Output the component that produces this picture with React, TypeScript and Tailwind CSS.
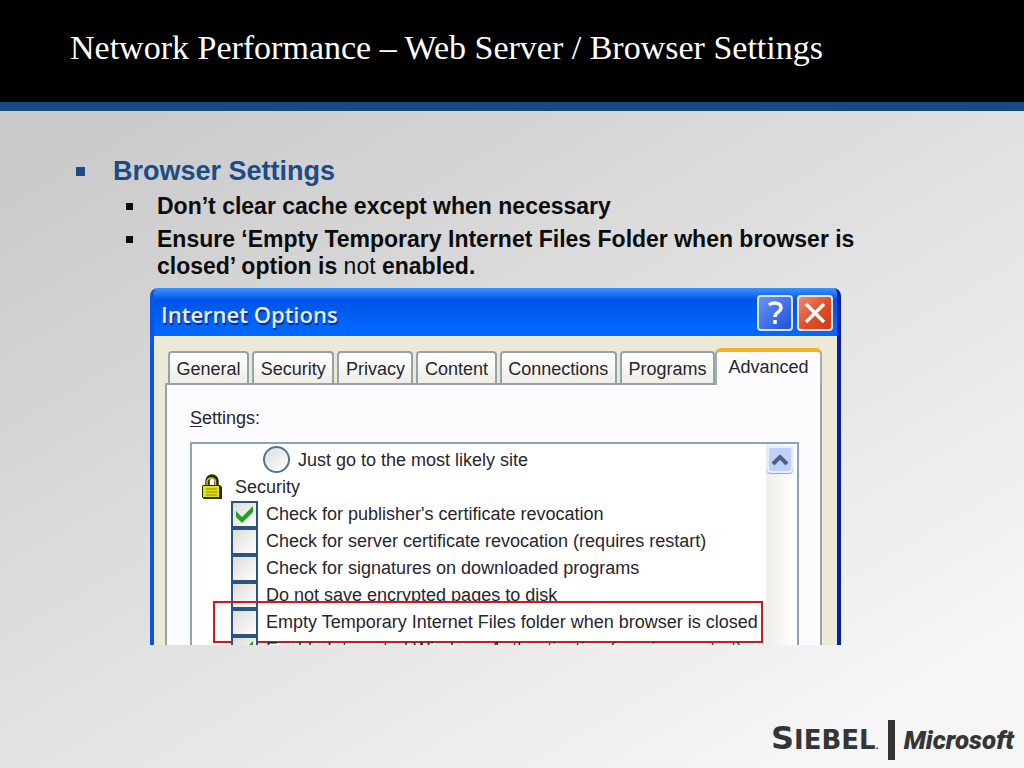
import React from 'react';

const tabs = ['General', 'Security', 'Privacy', 'Content', 'Connections', 'Programs'];

const options = [
  { id: 'publisher', label: "Check for publisher's certificate revocation", checked: true },
  { id: 'server', label: 'Check for server certificate revocation (requires restart)', checked: false },
  { id: 'signatures', label: 'Check for signatures on downloaded programs', checked: false },
  { id: 'encrypted', label: 'Do not save encrypted pages to disk', checked: false, clipped: true },
  { id: 'empty-temp', label: 'Empty Temporary Internet Files folder when browser is closed', checked: false, highlighted: true },
  { id: 'integrated', label: 'Enable Integrated Windows Authentication (requires restart)', checked: true },
];

function LockIcon() {
  return (
    <svg width="22" height="26" viewBox="0 0 22 26" aria-hidden="true">
      <path d="M6.500 12V7a4.500 4.500 0 0 1 9 0V12" fill="none" stroke="#2b2a05" strokeWidth="4.500" />
      <path d="M6 12V7a4.500 4.500 0 0 1 8.500 0V12" fill="none" stroke="#c9c655" strokeWidth="1.500" />
      <path d="M2 11h17l2 2v12H3l-2-2V12z" fill="#2b2a05" />
      <path d="M2 12h16v11H2z" fill="#e2e214" />
      <path d="M5 15h11M5 18h11M5 21h11" stroke="#8c8a10" strokeWidth="1" />
    </svg>
  );
}

interface CheckOptionProps {
  id: string;
  label: string;
  checked: boolean;
  clipped?: boolean;
  highlighted?: boolean;
}

function CheckOption({ id, label, checked, clipped, highlighted }: CheckOptionProps) {
  return (
    <li className="relative flex h-[27px] items-center gap-2 pl-[39px]">
      <span className="grid h-[27px] w-[27px] shrink-0">
        <input
          id={id}
          type="checkbox"
          defaultChecked={checked}
          className="col-start-1 row-start-1 h-[27px] w-[27px] appearance-none border-2 border-[#2a5580] bg-linear-to-br from-[#dcdcd7] to-white"
        />
        {checked && (
          <svg
            viewBox="0 0 27 27"
            className="pointer-events-none col-start-1 row-start-1 h-[27px] w-[27px]"
            aria-hidden="true"
          >
            <path d="M5 10l6 6L22 5v6L11 22 5 16z" fill="#21a121" />
          </svg>
        )}
      </span>
      <label
        htmlFor={id}
        className={`whitespace-nowrap leading-[27px] ${clipped ? 'h-5 self-start overflow-hidden' : ''}`}
      >
        {label}
      </label>
      {highlighted && (
        <span className="pointer-events-none absolute -top-2 left-[21px] h-[42px] w-[550px] border-2 border-[#d2181c]" />
      )}
    </li>
  );
}

function InternetOptions() {
  return (
    <section className="flex h-[357px] w-full max-w-[691px] flex-col overflow-hidden rounded-t-lg border-x-4 border-l-[#0a55e6] border-r-[#0420a8] bg-[#ece9d8] font-['Liberation_Sans',Arial,sans-serif] text-lg text-[#26262e]">
      <header className="-mx-1 flex h-12 shrink-0 items-center justify-between bg-linear-to-b from-[#3a93ff] via-[#0054e6] via-25% to-[#0068ff] to-85% pl-[11px] pr-2 pt-0.5">
        <h2 className="pt-0.5 font-['Open_Sans',sans-serif] text-[22px] font-semibold leading-8 text-[#e6eeff] [text-shadow:1px_2px_1px_#0a2a8a]">
          Internet Options
        </h2>
        <div className="flex gap-1">
          <button
            aria-label="Help"
            className="flex h-9 w-9 items-center justify-center rounded border-2 border-[#dce6ff] bg-linear-to-br from-[#6a94f8] to-[#1f4fd8]"
          >
            <svg width="20" height="26" viewBox="0 0 20 26" fill="none" stroke="#fff" strokeWidth="3.500" aria-hidden="true">
              <path d="M4 5c3-3 12-3 12 3 0 4-6 4-6 9M10 20v4" />
            </svg>
          </button>
          <button
            aria-label="Close"
            className="flex h-9 w-9 items-center justify-center rounded border-2 border-[#fbe4dc] bg-linear-to-br from-[#ee8a6c] via-[#e0512c] to-[#cf3a12]"
          >
            <svg width="22" height="22" viewBox="0 0 22 22" stroke="#fff" strokeWidth="3.500" aria-hidden="true">
              <path d="M2 2l18 18M20 2L2 20" />
            </svg>
          </button>
        </div>
      </header>

      <div className="flex min-h-0 grow flex-col pl-[11px] pr-[15px] pt-3">
        <nav className="z-10 -mb-0.5 flex shrink-0 items-end gap-[3px] pl-[3px]">
          {tabs.map((tab) => (
            <button
              key={tab}
              className="mb-0.5 h-8 grow rounded-t border-2 border-b-0 border-[#93a3a8] bg-linear-to-b from-white to-[#eeeee6] pt-0.5"
            >
              {tab}
            </button>
          ))}
          <button className="-ml-[3px] h-[37px] w-[107px] rounded-t-md border-x-2 border-t-4 border-x-[#a3adae] border-t-[#f3b02c] bg-[#fcfcfe] pb-1">
            Advanced
          </button>
        </nav>

        <div className="flex min-h-0 grow flex-col border-2 border-b-0 border-[#98a3a4] bg-[#fbfbfd] pl-[23px] pr-[21px] pt-5">
          <p id="settings-label" className="mb-[11px] leading-[26px]">
            <u className="underline-offset-2">S</u>ettings:
          </p>
          <div className="flex min-h-0 grow justify-between border-2 border-b-0 border-[#8aa5ba] bg-white">
            <ul aria-labelledby="settings-label" className="pt-0.5">
              <li className="flex h-[27px] items-center gap-2 pl-[71px]">
                <input
                  id="likely"
                  type="radio"
                  className="h-[27px] w-[27px] appearance-none rounded-full border-2 border-[#527394] bg-linear-to-br from-[#dcdcd7] to-white"
                />
                <label htmlFor="likely">Just go to the most likely site</label>
              </li>
              <li className="flex h-7 items-center gap-3 pl-[9px]">
                <LockIcon />
                Security
              </li>
              {options.map((option) => (
                <CheckOption key={option.id} {...option} />
              ))}
            </ul>
            <div className="mr-[3px] w-7 shrink-0 bg-linear-to-r from-[#efeee8] to-[#fefefb] pl-px pt-0.5">
              <button
                aria-label="Scroll up"
                className="flex h-[27px] w-[26px] items-center justify-center rounded border-2 border-[#e6edff] bg-[#c1d0fb] shadow-[0_1px_1px_#8fa8cc]"
              >
                <svg width="18" height="12" viewBox="0 0 18 12" fill="none" stroke="#4d6185" strokeWidth="4" aria-hidden="true">
                  <path d="M2 10l7-7 7 7" />
                </svg>
              </button>
            </div>
          </div>
        </div>
      </div>
    </section>
  );
}

function Logos() {
  return (
    <footer className="mt-auto flex h-14 items-center justify-end gap-[9px] pr-[10px] leading-none text-[#353535]">
      <span className="pt-1 font-['DejaVu_Sans',sans-serif] text-[26px] font-bold leading-8">
        <span className="text-[32px]">S</span>IEBEL<span className="text-[8px]">.</span>
      </span>
      <span className="h-10 w-[7px] bg-[#353535]" />
      <span className="font-['Roboto','Liberation_Sans',sans-serif] text-[26px] font-black italic leading-none">
        Microsoft
      </span>
    </footer>
  );
}

export default function App() {
  return (
    <div className="flex min-h-screen flex-col bg-linear-[150deg] from-[#cbcbcb] from-15% to-[#f6f6f6] to-90% font-['Liberation_Sans',Arial,sans-serif]">
      <header className="h-[111px] border-b-[9px] border-[#174a80] bg-black px-[70px] pt-7">
        <h1 className="font-['Liberation_Serif','Times_New_Roman',serif] text-[34px] leading-10 text-white">
          Network Performance – Web Server / Browser Settings
        </h1>
      </header>

      <main className="pl-[76px] pr-[140px] pt-[42px]">
        <div className="flex items-center gap-7 text-[#1b4c87]">
          <span className="h-[9px] w-[9px] bg-[#1b4c87]" />
          <h2 className="text-[27px] font-bold leading-9">Browser Settings</h2>
        </div>
        <ul className="mt-1 space-y-1.5 pl-[50px] text-[23px] font-bold leading-[27px] text-[#0c0c0c]">
          <li className="flex gap-6">
            <span className="mt-2.5 h-[7px] w-[7px] shrink-0 bg-[#0c0c0c]" />
            <span>Don’t clear cache except when necessary</span>
          </li>
          <li className="flex gap-6">
            <span className="mt-2.5 h-[7px] w-[7px] shrink-0 bg-[#0c0c0c]" />
            <span>
              Ensure ‘Empty Temporary Internet Files Folder when browser is closed’ option is{' '}
              <span className="font-normal">not</span> enabled.
            </span>
          </li>
        </ul>
        <div className="mt-2 pl-[74px]">
          <InternetOptions />
        </div>
      </main>

      <Logos />
    </div>
  );
}
